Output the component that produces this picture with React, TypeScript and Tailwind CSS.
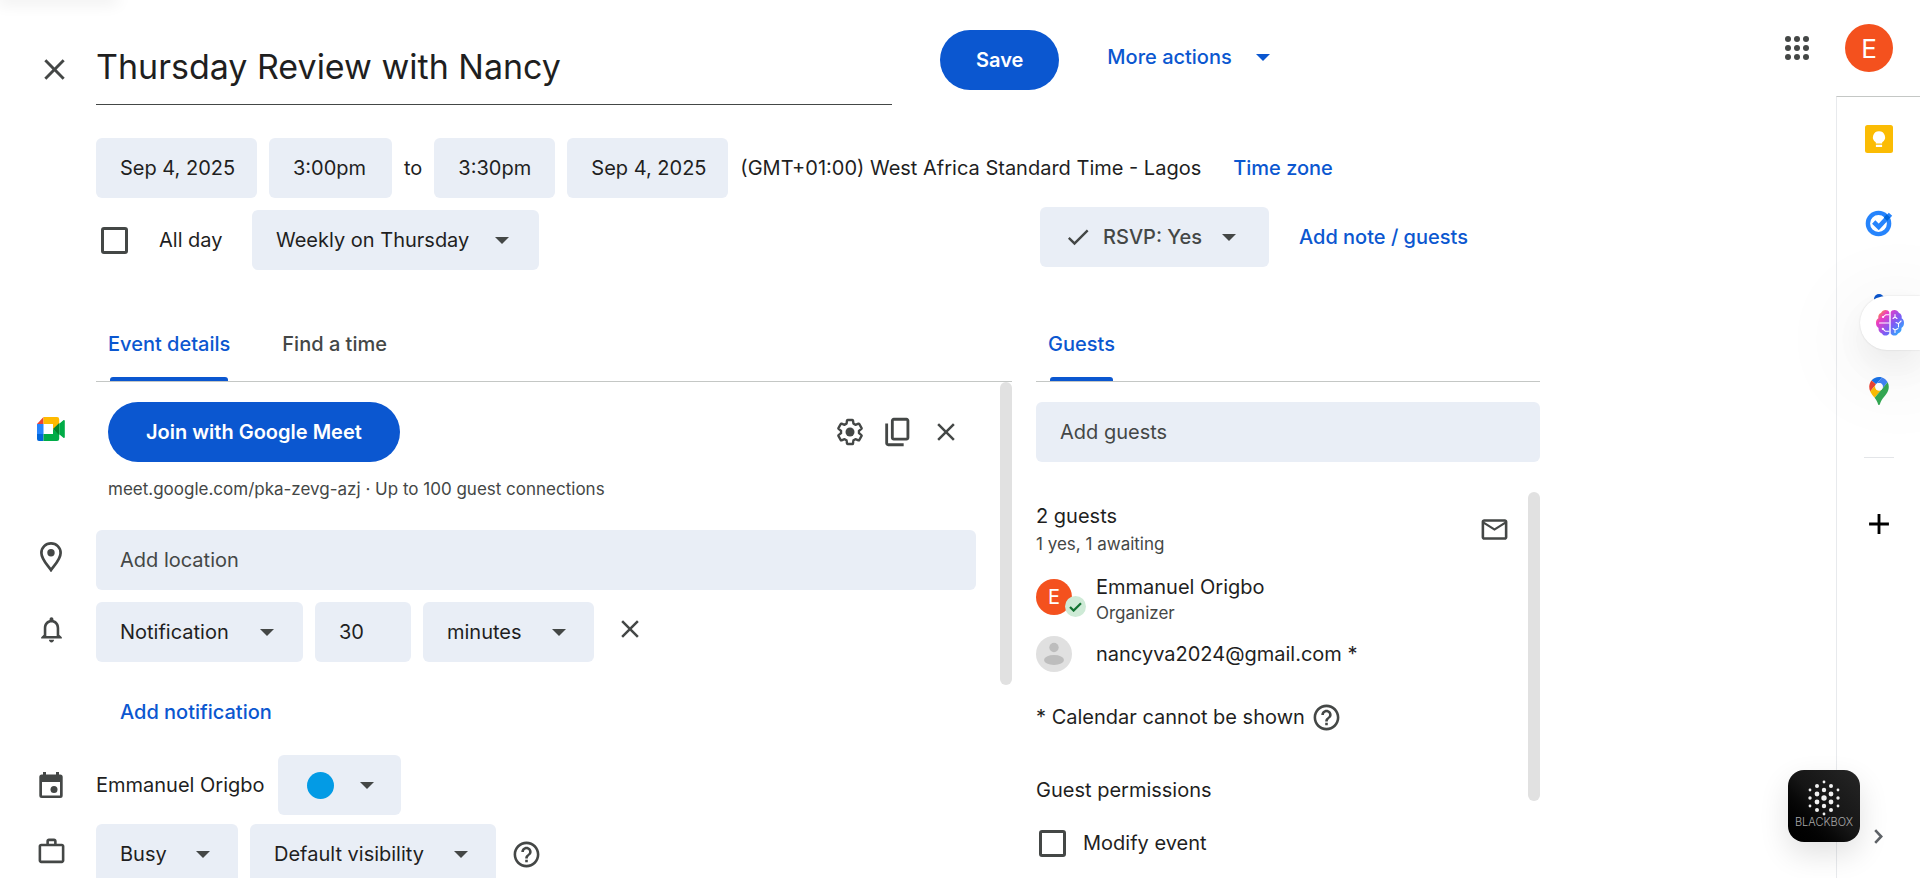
import React from 'react';
import {
  MdAdd,
  MdCheck,
  MdClose,
  MdHelpOutline,
  MdOutlineMailOutline,
  MdOutlineNotifications,
  MdWorkOutline,
} from 'react-icons/md';

function Caret({ className = '' }: { className?: string }) {
  return (
    <svg viewBox="0 0 14 7" className={`h-[7px] w-[14px] ${className}`} fill="currentColor" aria-hidden="true">
      <path d="M0 0h14L7 7z" />
    </svg>
  );
}

function Field({ label, value, width }: { label: string; value: string; width: string }) {
  return (
    <input
      type="text"
      aria-label={label}
      defaultValue={value}
      className={`h-15 rounded-md bg-[#e9eef6] pl-6 text-[20px] text-[#1f1f1f] outline-none ${width}`}
    />
  );
}

function Dropdown({ label, value, width, caret = 'right-9' }: { label: string; value: string; width: string; caret?: string }) {
  return (
    <div className={`relative h-15 ${width}`}>
      <select
        aria-label={label}
        className="h-full w-full appearance-none rounded-md bg-[#e9eef6] pl-6 text-[20px] text-[#1f1f1f] outline-none"
      >
        <option>{value}</option>
      </select>
      <Caret className={`pointer-events-none absolute top-[27px] text-[#444746] ${caret}`} />
    </div>
  );
}

function Gutter({ children }: { children: React.ReactNode }) {
  return <div className="flex h-[54px] w-24 shrink-0 items-center justify-center pl-1.5 text-[#444746]">{children}</div>;
}

function Tick({ id }: { id: string }) {
  return (
    <input
      id={id}
      type="checkbox"
      className="h-[27px] w-[27px] shrink-0 appearance-none rounded-[3px] border-3 border-[#444746] checked:bg-[#0b57d0]"
    />
  );
}

function AppsIcon() {
  return (
    <svg viewBox="0 0 24 24" className="h-6 w-6" fill="#444746" aria-hidden="true">
      {[3, 12, 21].map((y) => [3, 12, 21].map((x) => <circle key={`${x}-${y}`} cx={x} cy={y} r="3" />))}
    </svg>
  );
}

function GearIcon() {
  return (
    <svg viewBox="0 0 24 24" className="h-[30px] w-[30px]" fill="none" aria-hidden="true">
      <path
        stroke="currentColor"
        strokeWidth="1.900"
        strokeLinejoin="round"
        d="M19.140 12.940c.04-.3.06-.61.06-.94 0-.32-.02-.64-.07-.94l2.030-1.580a.49.49 0 0 0 .12-.61l-1.920-3.320a.488.488 0 0 0-.59-.22l-2.390.96c-.5-.38-1.030-.7-1.620-.94l-.36-2.540a.484.484 0 0 0-.48-.41h-3.840c-.24 0-.43.17-.47.41l-.36 2.540c-.59.24-1.130.57-1.620.94l-2.390-.96c-.22-.08-.47 0-.59.22L2.740 8.870c-.12.21-.08.47.12.61l2.030 1.580c-.05.3-.09.63-.09.94s.02.64.07.94l-2.030 1.580a.49.49 0 0 0-.12.61l1.920 3.320c.12.22.37.29.59.22l2.390-.96c.5.38 1.030.7 1.620.94l.36 2.540c.05.24.24.41.48.41h3.840c.24 0 .44-.17.47-.41l.36-2.540c.59-.24 1.130-.56 1.620-.94l2.390.96c.22.08.47 0 .59-.22l1.920-3.320c.12-.22.07-.47-.12-.61z"
      />
      <circle cx="12" cy="12" r="3.600" fill="currentColor" />
    </svg>
  );
}

function CopyIcon() {
  return (
    <svg viewBox="0 0 24 24" className="h-[34px] w-[34px]" fill="currentColor" aria-hidden="true">
      <path d="M9 18q-.825 0-1.412-.587T7 16V4q0-.825.588-1.412T9 2h9q.825 0 1.413.588T20 4v12q0 .825-.587 1.413T18 18zm0-2h9V4H9zm-4 6q-.825 0-1.412-.587T3 20V6h2v14h11v2z" />
    </svg>
  );
}

function PlaceIcon() {
  return (
    <svg viewBox="0 0 22 30" className="h-[30px] w-[22px]" fill="none" aria-hidden="true">
      <path
        d="M11 1.400c-5.400 0-9.600 4.200-9.600 9.500C1.400 17.600 8.500 24 11 28c2.500-4 9.600-10.400 9.600-17.100 0-5.300-4.200-9.500-9.600-9.500z"
        stroke="currentColor"
        strokeWidth="2.700"
      />
      <circle cx="11" cy="10.700" r="3.700" fill="currentColor" />
    </svg>
  );
}

function EventIcon() {
  return (
    <svg viewBox="0 0 24 26" className="h-[26px] w-6" fill="currentColor" aria-hidden="true">
      <path
        fillRule="evenodd"
        d="M4 0h3v2.500h10V0h3v2.500h1.200A2.500 2.500 0 0 1 23.700 5v18.500a2.500 2.500 0 0 1-2.500 2.500H2.800A2.500 2.500 0 0 1 .3 23.500V5a2.500 2.500 0 0 1 2.500-2.500H4zM3 10v13.400h18V10z"
      />
      <circle cx="15" cy="17.500" r="3.500" />
    </svg>
  );
}

function MeetIcon() {
  return (
    <svg viewBox="0 0 28 24" className="h-6 w-7" aria-hidden="true">
      <path d="M6.500 0v7H0z" fill="#ea4335" />
      <path d="M0 7h6.500v10H0z" fill="#2684fc" />
      <path d="M0 17h6.500v7H2a2 2 0 0 1-2-2z" fill="#0066da" />
      <path d="M6.500 0H20a2.200 2.200 0 0 1 2.200 2.200V7.500L16 12.500V7H6.500z" fill="#ffba00" />
      <path d="M6.500 17H16v-5l6.200 5v4.800A2.200 2.200 0 0 1 20 24H6.500z" fill="#00ac47" />
      <path d="M16 12l6.200-6v12z" fill="#00832d" />
      <path d="M22.200 6.700l4.200-3.500c.6-.5 1.400-.2 1.400.7v16.200c0 .9-.8 1.200-1.400.7l-4.200-3.500z" fill="#00ac47" />
    </svg>
  );
}

function KeepIcon() {
  return (
    <svg viewBox="0 0 28 28" className="h-7 w-7" aria-hidden="true">
      <rect width="28" height="28" rx="2.500" fill="#fbbc04" />
      <path d="M14 6.200a6 6 0 0 0-3.200 11.100V18.400h6.400v-1.100A6 6 0 0 0 14 6.200zM10.900 19.800h6.200v2.200h-6.200z" fill="#fff" />
    </svg>
  );
}

function TasksIcon() {
  return (
    <svg viewBox="0 0 28 28" className="h-7 w-7" fill="none" aria-hidden="true">
      <circle cx="13.500" cy="14.500" r="10.600" stroke="#2684fc" strokeWidth="4.400" />
      <path d="M8.700 13l5 5L25.500 5.200" stroke="#2684fc" strokeWidth="4.600" />
      <path d="M18.800 8.400l3-3.200 3.400 3.400-3 3.400z" fill="#0066da" />
    </svg>
  );
}

function ContactsIcon() {
  return (
    <svg viewBox="0 0 28 28" className="h-7 w-7" fill="#0b57d0" aria-hidden="true">
      <circle cx="14" cy="6" r="5" />
      <path d="M4 26c0-8 4-12 10-12s10 4 10 12z" />
    </svg>
  );
}

function MapsIcon() {
  return (
    <svg viewBox="0 0 92.3 132.3" className="h-7 w-5" aria-hidden="true">
      <path fill="#1a73e8" d="M60.200 2.200C55.800.8 51 0 46.100 0 32 0 19.300 6.400 10.800 16.500l21.800 18.300z" />
      <path fill="#ea4335" d="M10.800 16.500C4.100 24.500 0 34.900 0 46.100c0 8.700 1.700 15.700 4.600 22l28-33.300z" />
      <path fill="#4285f4" d="M46.200 28.500c9.800 0 17.700 7.900 17.700 17.700 0 4.300-1.600 8.300-4.200 11.400 0 0 13.900-16.600 27.500-32.700-5.600-10.800-15.300-19-27-22.700L32.600 34.800c3.300-3.800 8.100-6.300 13.600-6.300" />
      <path fill="#fbbc04" d="M46.200 63.800c-9.800 0-17.700-7.900-17.700-17.700 0-4.300 1.500-8.300 4.100-11.300l-28 33.300c4.800 10.600 12.800 19.200 21 29.900l34.100-40.500c-3.300 3.900-8.100 6.300-13.500 6.300" />
      <path fill="#34a853" d="M59.100 109.200c15.400-24.100 33.300-35 33.300-63 0-7.700-1.900-14.900-5.200-21.300L25.600 98c2.600 3.400 5.300 7.300 7.900 11.300 9.400 14.500 6.800 23.100 12.800 23.100s3.400-8.700 12.800-23.200" />
      <circle cx="46.200" cy="46.200" r="17.500" fill="#fff" />
    </svg>
  );
}

function BrainIcon() {
  return (
    <svg viewBox="0 0 28 26" className="h-[26px] w-7" aria-hidden="true">
      <defs>
        <linearGradient id="brain" x1="2" y1="2" x2="26" y2="24" gradientUnits="userSpaceOnUse">
          <stop offset="0" stopColor="#fb923c" />
          <stop offset=".22" stopColor="#ec3bc4" />
          <stop offset=".6" stopColor="#7c5cf5" />
          <stop offset="1" stopColor="#22b8ff" />
        </linearGradient>
      </defs>
      <path
        fill="url(#brain)"
        d="M13.300 2.500v21c-1 2.300-5.600 3.300-7.300-.1C3.600 22.800 2 20.600 2.600 18 .8 16.800 0 15.400 0 13s.9-3.800 2.400-4.700C1.800 5.800 3 3.700 5 3 6.600-.8 12.300-.8 13.300 2.500zM14.700 2.500c1-3.300 6.700-3.300 8.300.5 2 .7 3.200 2.800 2.600 5.300C27.100 9.200 28 10.600 28 13s-.8 3.800-2.600 5c.6 2.600-1 4.800-3.400 5.400-1.700 3.400-6.300 2.400-7.300.1z"
      />
      <g fill="none" stroke="#fff" strokeWidth="1.100" strokeLinecap="round">
        <path d="M13 4.700h-3.200l-2.300 2M3.500 13H13M13 21.300h-3.600L7 19M17 8.500l2-1.500 2 1.500M19 7V4.500M20 12.500l2.500 1.200 2.600-2.700M22.500 13.700V17M17 18.500l2 1.500 3-1.500M19 20v2.500" />
      </g>
      <circle cx="7" cy="7" r="1.100" fill="#fff" />
      <circle cx="6.800" cy="18.800" r="1.100" fill="#fff" />
    </svg>
  );
}

const DOTS: [number, number, number][] = [
  [21, 2, 1.4],
  [14, 6, 2], [28, 6, 2],
  [7, 10, 1.4], [21, 10, 2.2], [35, 10, 1.4],
  [14, 14, 2.4], [28, 14, 2.4],
  [7, 18, 1.7], [21, 18, 2.7], [35, 18, 1.7],
  [14, 22, 2.4], [28, 22, 2.4],
  [7, 26, 1.4], [21, 26, 2.2], [35, 26, 1.4],
  [14, 30, 2], [28, 30, 2],
  [21, 34, 1.4],
];

function BlackboxTile() {
  return (
    <button
      type="button"
      className="absolute right-15 bottom-9 flex h-[72px] w-[72px] flex-col items-center rounded-2xl bg-linear-to-bl from-[#262626] via-[#151515] to-black pt-2.5 shadow-[0_12px_30px_rgba(0,0,0,0.12)]"
    >
      <svg viewBox="0 0 42 36" className="h-9 w-[42px]" fill="#f1f1f1" aria-hidden="true">
        {DOTS.map(([x, y, r]) => (
          <circle key={`${x}-${y}`} cx={x} cy={y} r={r} />
        ))}
      </svg>
      <span className="text-[11px] leading-3 font-light text-[#a8a8a8]">BLACKBOX</span>
    </button>
  );
}

function Tab({ children, active = false }: { children: string; active?: boolean }) {
  return (
    <button
      type="button"
      role="tab"
      aria-selected={active}
      className={`relative h-full text-[20px] font-medium ${active ? 'text-[#0b57d0]' : 'text-[#444746]'}`}
    >
      {children}
      {active && <span className="absolute inset-x-[2px] bottom-0 h-1 rounded-t-[3px] bg-[#0b57d0]" />}
    </button>
  );
}

function Header() {
  return (
    <header className="flex items-start pl-[30px]">
      <button type="button" aria-label="Close" className="mt-[45px] flex h-12 w-12 items-center justify-center text-[#444746]">
        <MdClose size={35} />
      </button>
      <input
        type="text"
        aria-label="Title"
        defaultValue="Thursday Review with Nancy"
        className="mt-[33px] ml-[18px] h-[72px] max-w-[796px] min-w-0 flex-1 border-b border-[#444746] pb-1 text-[34px] text-[#1f1f1f] outline-none"
      />
      <button type="button" className="mt-[30px] ml-12 h-15 rounded-full bg-[#0b57d0] px-9 text-[20px] font-semibold text-white">
        Save
      </button>
      <button type="button" className="mt-[33px] ml-12 flex h-12 items-center gap-6 text-[20px] font-medium text-[#0b57d0]">
        More actions
        <Caret />
      </button>
      <button type="button" aria-label="Google apps" className="mt-6 mr-[15px] ml-auto flex h-12 w-12 items-center justify-center">
        <AppsIcon />
      </button>
    </header>
  );
}

function Schedule() {
  return (
    <section className="mt-[33px] pl-24 text-[20px] text-[#1f1f1f]">
      <div className="flex items-center gap-3">
        <Field label="Start date" value="Sep 4, 2025" width="w-[161px]" />
        <Field label="Start time" value="3:00pm" width="w-[123px]" />
        <span>to</span>
        <Field label="End time" value="3:30pm" width="w-[121px]" />
        <Field label="End date" value="Sep 4, 2025" width="w-[161px]" />
        <span>(GMT+01:00) West Africa Standard Time - Lagos</span>
        <button type="button" className="ml-5 font-medium text-[#0b57d0]">
          Time zone
        </button>
      </div>
      <div className="flex items-start">
        <div className="mt-3 flex flex-1 items-center pl-[5px]">
          <Tick id="all-day" />
          <label htmlFor="all-day" className="w-[124px] pl-[31px]">
            All day
          </label>
          <Dropdown label="Repeat" value="Weekly on Thursday" width="w-[287px]" caret="right-[30px]" />
        </div>
        <div className="mt-[9px] flex w-[500px] items-center">
          <button type="button" className="flex h-15 w-[229px] items-center rounded-md bg-[#e9eef6] pl-6 font-medium text-[#444746]">
            <MdCheck size={28} />
            <span className="ml-[11px]">RSVP: Yes</span>
            <Caret className="ml-5" />
          </button>
          <button type="button" className="ml-[30px] font-medium text-[#0b57d0]">
            Add note / guests
          </button>
        </div>
      </div>
    </section>
  );
}

function Details() {
  return (
    <section className="min-w-0 flex-1">
      <div role="tablist" className="ml-24 box-content flex h-[75px] gap-[52px] border-b border-[#c4c7c5] pl-3">
        <Tab active>Event details</Tab>
        <Tab>Find a time</Tab>
      </div>
      <div className="relative pt-5 pr-9">
        <div className="flex items-start">
          <Gutter>
            <MeetIcon />
          </Gutter>
          <div className="flex flex-1 items-center pl-3">
            <button type="button" className="h-15 rounded-full bg-[#0b57d0] px-[38px] text-[20px] font-semibold text-white">
              Join with Google Meet
            </button>
            <div className="mr-1.5 ml-auto flex text-[#444746]">
              <button type="button" aria-label="Video call options" className="flex h-12 w-12 items-center justify-center">
                <GearIcon />
              </button>
              <button type="button" aria-label="Copy link" className="flex h-12 w-12 items-center justify-center">
                <CopyIcon />
              </button>
              <button type="button" aria-label="Remove video call" className="flex h-12 w-12 items-center justify-center">
                <MdClose size={30} />
              </button>
            </div>
          </div>
        </div>
        <p className="mt-[15px] pl-[108px] text-[17px] leading-6 text-[#444746]">
          meet.google.com/pka-zevg-azj · Up to 100 guest connections
        </p>
        <div className="mt-[29px] flex items-start">
          <Gutter>
            <PlaceIcon />
          </Gutter>
          <input
            type="text"
            aria-label="Location"
            placeholder="Add location"
            className="h-15 min-w-0 flex-1 rounded-md bg-[#e9eef6] px-6 text-[20px] outline-none placeholder:text-[#444746]"
          />
        </div>
        <div className="mt-3 flex items-start">
          <Gutter>
            <MdOutlineNotifications size={31} />
          </Gutter>
          <div className="flex gap-3">
            <Dropdown label="Notification type" value="Notification" width="w-[207px]" caret="right-[29px]" />
            <Field label="Amount" value="30" width="w-24" />
            <Dropdown label="Unit" value="minutes" width="w-[171px]" caret="right-7" />
            <button type="button" aria-label="Remove notification" className="flex h-[54px] w-12 items-center justify-center text-[#444746]">
              <MdClose size={30} />
            </button>
          </div>
        </div>
        <button type="button" className="mt-[26px] ml-[120px] block h-12 text-[20px] font-medium text-[#0b57d0]">
          Add notification
        </button>
        <div className="mt-[19px] flex items-center">
          <Gutter>
            <EventIcon />
          </Gutter>
          <span className="text-[20px] text-[#1f1f1f]">Emmanuel Origbo</span>
          <button
            type="button"
            aria-label="Event color"
            className="ml-[13px] flex h-15 w-[123px] items-center gap-[26px] rounded-md bg-[#e9eef6] pl-[29px] text-[#444746]"
          >
            <span className="h-[27px] w-[27px] rounded-full bg-[#039be5]" />
            <Caret />
          </button>
        </div>
        <div className="mt-[9px] flex items-start">
          <Gutter>
            <MdWorkOutline size={31} />
          </Gutter>
          <div className="flex items-center gap-3">
            <Dropdown label="Availability" value="Busy" width="w-[142px]" caret="right-7" />
            <Dropdown label="Visibility" value="Default visibility" width="w-[246px]" caret="right-7" />
            <button type="button" aria-label="Visibility help" className="ml-[3px] text-[#444746]">
              <MdHelpOutline size={31} />
            </button>
          </div>
        </div>
        <span className="absolute top-0 right-0 h-[303px] w-3 rounded-full bg-[#e1e1e1]" />
      </div>
    </section>
  );
}

function Guests() {
  return (
    <section className="w-[504px] shrink-0">
      <div role="tablist" className="box-content flex h-[75px] border-b border-[#c4c7c5] pl-3">
        <Tab active>Guests</Tab>
      </div>
      <input
        type="text"
        aria-label="Guests"
        placeholder="Add guests"
        className="mt-5 h-15 w-full rounded-md bg-[#e9eef6] px-6 text-[20px] outline-none placeholder:text-[#444746]"
      />
      <div className="relative mt-[30px] pt-2.5 text-[20px] text-[#1f1f1f]">
        <div className="flex items-center justify-between pr-[30px]">
          <div>
            <h2 className="leading-7">2 guests</h2>
            <p className="mt-0.5 text-[17px] leading-6 text-[#444746]">1 yes, 1 awaiting</p>
          </div>
          <button type="button" aria-label="Email guests" className="text-[#444746]">
            <MdOutlineMailOutline size={31} />
          </button>
        </div>
        <ul className="mt-[17px]">
          <li className="flex gap-6">
            <span className="relative mt-1.5 flex h-9 w-9 items-center justify-center rounded-full bg-[#f4511e] text-[20px] text-white">
              E
              <span className="absolute top-[17px] left-[29px] flex h-[21px] w-[21px] items-center justify-center rounded-full bg-[#ceead6] text-[#137333]">
                <svg viewBox="0 0 13 10" className="h-[10px] w-[13px]" fill="none" stroke="currentColor" strokeWidth="2.200" aria-hidden="true">
                  <path d="M1 5l3.600 3.600L12 1.200" />
                </svg>
              </span>
            </span>
            <div>
              <p className="leading-7">Emmanuel Origbo</p>
              <p className="text-[17px] leading-6 text-[#444746]">Organizer</p>
            </div>
          </li>
          <li className="mt-[11px] flex items-center gap-6">
            <svg viewBox="0 0 36 36" className="h-9 w-9" aria-hidden="true">
              <circle cx="18" cy="18" r="18" fill="#e0e0e0" />
              <circle cx="18" cy="11.500" r="4.700" fill="#bdbdbd" />
              <ellipse cx="18" cy="24" rx="10" ry="5" fill="#bdbdbd" />
            </svg>
            <span>nancyva2024@gmail.com *</span>
          </li>
        </ul>
        <p className="mt-[29px] flex h-8 items-center gap-1.5">
          * Calendar cannot be shown
          <MdHelpOutline size={31} className="text-[#444746]" />
        </p>
        <h3 className="mt-[43px] leading-7">Guest permissions</h3>
        <div className="mt-[25px] flex h-7 items-center pl-[3px]">
          <Tick id="modify-event" />
          <label htmlFor="modify-event" className="pl-[17px]">
            Modify event
          </label>
        </div>
        <span className="absolute top-0 right-0 h-[309px] w-3 rounded-full bg-[#e1e1e1]" />
      </div>
    </section>
  );
}

function RailButton({ label, children }: { label: string; children: React.ReactNode }) {
  return (
    <button type="button" aria-label={label} className="flex h-[84px] w-full items-center justify-center">
      {children}
    </button>
  );
}

function Rail() {
  return (
    <aside className="flex w-21 shrink-0 flex-col">
      <div className="flex h-24 items-center pl-[9px]">
        <button type="button" aria-label="Account" className="h-12 w-12 rounded-full bg-[#f4511e] text-[26px] text-white">
          E
        </button>
      </div>
      <nav className="flex flex-1 flex-col items-center border-t border-l border-t-[#c4c7c5] border-l-[#e8eaed]">
        <RailButton label="Keep">
          <KeepIcon />
        </RailButton>
        <RailButton label="Tasks">
          <TasksIcon />
        </RailButton>
        <RailButton label="Contacts">
          <ContactsIcon />
        </RailButton>
        <RailButton label="Maps">
          <MapsIcon />
        </RailButton>
        <span className="mt-6 mb-6 h-px w-[30px] bg-[#e3e5e8]" />
        <RailButton label="Get add-ons">
          <MdAdd size={34} className="text-black" />
        </RailButton>
        <span className="mt-auto w-full">
          <RailButton label="Hide side panel">
            <svg viewBox="0 0 9 15" className="h-[15px] w-[9px]" fill="none" stroke="#5f6368" strokeWidth="2.600" aria-hidden="true">
              <path d="M1.200 1.200l6 6.300-6 6.300" />
            </svg>
          </RailButton>
        </span>
      </nav>
    </aside>
  );
}

export default function App() {
  return (
    <div className="relative flex h-screen overflow-hidden bg-white font-['Inter','Roboto',sans-serif]">
      <main className="min-w-0 flex-1">
        <Header />
        <div className="max-w-[1540px]">
          <Schedule />
          <div className="mt-9 flex gap-6">
            <Details />
            <Guests />
          </div>
        </div>
      </main>
      <Rail />
      <span className="absolute -top-2 left-0 h-2 w-[116px] shadow-[0_2px_16px_2px_rgba(0,0,0,0.07)]" />
      <button
        type="button"
        aria-label="Assistant"
        className="absolute top-[296px] right-0 flex h-[54px] w-15 items-center rounded-l-full bg-white pl-4 shadow-[0_0_2px_rgba(0,0,0,0.14),0_16px_30px_rgba(0,0,0,0.05),0_16px_80px_24px_rgba(0,0,0,0.04)]"
      >
        <BrainIcon />
      </button>
      <BlackboxTile />
    </div>
  );
}
